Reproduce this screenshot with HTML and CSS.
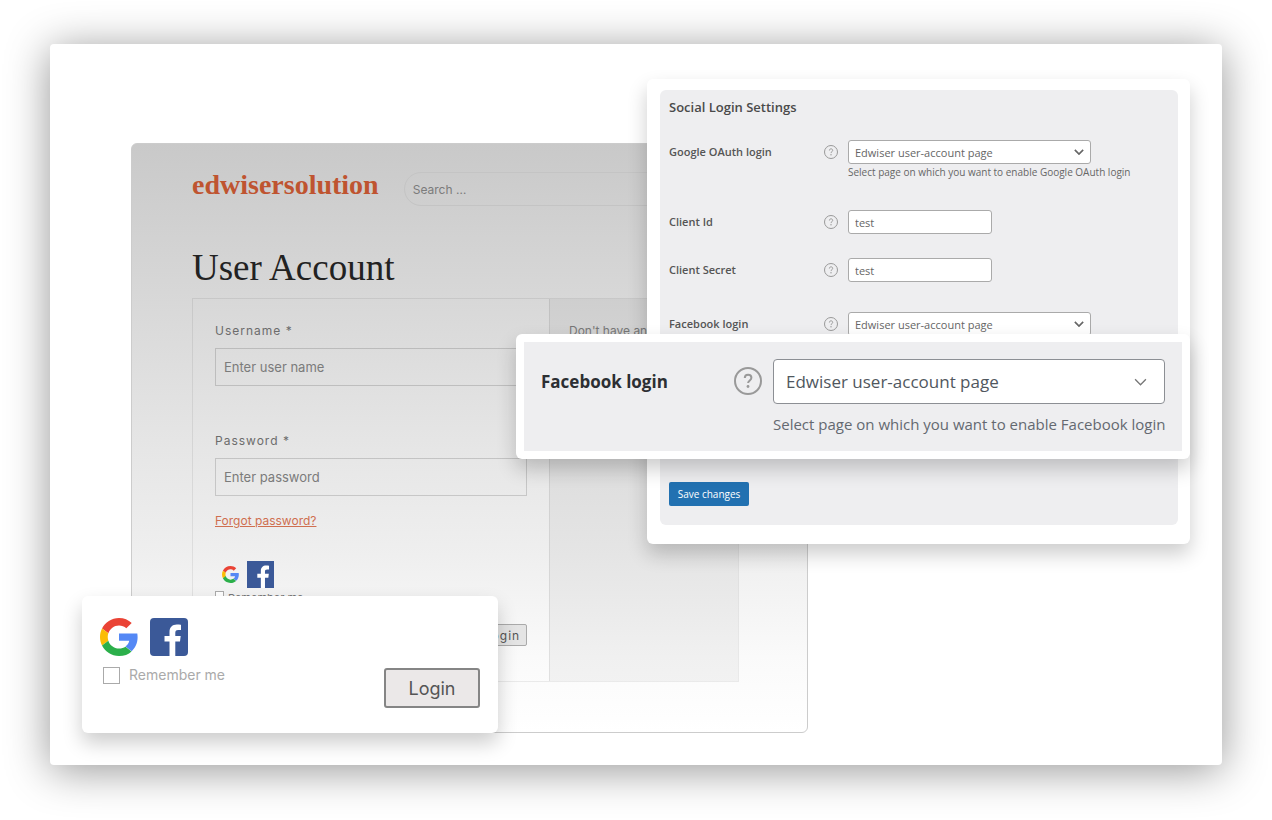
FILE: index.html
```
<!DOCTYPE html>
<html lang="en">

<head>
  <meta charset="utf-8">
  <meta name="viewport" content="width=device-width, initial-scale=1.0">
  <title>User Account</title>
  <link rel="stylesheet" href="styles.css">
</head>

<body>

<!-- shared icons -->
<svg class="icon_defs" aria-hidden="true">
  <symbol id="google" viewBox="0 0 48 48">
    <path fill="#EA4335" d="M24 9.5c3.54 0 6.71 1.22 9.21 3.6l6.85-6.85C35.9 2.38 30.47 0 24 0 14.62 0 6.51 5.38 2.56 13.22l7.98 6.19C12.43 13.72 17.74 9.5 24 9.5z"/>
    <path fill="#5488F5" d="M47.5 24.55c0-1.9-.15-3.2-.4-4.85H24v9.02h12.94c-.58 2.96-2.26 5.48-4.78 7.18l7.73 6c4.51-4.18 7.61-10.36 7.61-17.35z"/>
    <path fill="#FBBC05" d="M10.53 28.59c-.48-1.45-.76-2.99-.76-4.59s.27-3.14.76-4.59l-7.98-6.19C.92 16.46 0 20.12 0 24c0 3.88.92 7.54 2.56 10.78l7.97-6.19z"/>
    <path fill="#2BAF4A" d="M24 48c6.48 0 11.93-2.13 15.89-5.81l-7.73-6c-2.15 1.45-4.92 2.3-8.16 2.3-6.26 0-11.57-4.22-13.47-9.91l-7.98 6.19C6.51 42.62 14.62 48 24 48z"/>
  </symbol>
  <symbol id="facebook" viewBox="0 0 38 38">
    <path fill="#3b5998" d="M0 0h38v38H0z"/>
    <path fill="#fff" d="M19.500 38V23.500h-5v-5.500h5v-4c0-4.800 3-7.500 7.300-7.500 1.600 0 3.200.1 4.200.3v5.200h-2.800c-2.300 0-2.900 1.200-2.900 2.800v3.200h5.400l-.7 5.500h-4.700v14.500z"/>
  </symbol>
  <symbol id="help" viewBox="0 0 28 28">
    <circle cx="14" cy="14" r="13" fill="none" stroke="currentColor" stroke-width="2"/>
    <path d="M10.800 11c0-2.200 1.400-3.300 3.300-3.300s3.300 1.200 3.300 3c0 2.600-3.300 2.800-3.300 5.400" fill="none" stroke="currentColor" stroke-width="2"/>
    <circle cx="14" cy="19.500" r="1.400" fill="currentColor"/>
  </symbol>
  <symbol id="arrow" viewBox="0 0 12 8">
    <path d="M1 1.500l5 5 5-5" fill="none" stroke="currentColor" stroke-width="var(--w)"/>
  </symbol>
</svg>

<main class="frame">

  <section class="site">
    <header class="site_header">
      <a class="logo" href="#">edwisersolution</a>
      <input class="search" type="search" placeholder="Search …" aria-label="Search">
    </header>

    <h1>User Account</h1>

    <div class="account">
      <form class="login_form">
        <label for="username">Username *</label>
        <input class="text_box" id="username" type="text" placeholder="Enter user name">
        <label for="password">Password *</label>
        <input class="text_box" id="password" type="password" placeholder="Enter password">
        <a class="forgot" href="#">Forgot password?</a>
        <div class="social">
          <svg class="google_small"><use href="#google"/></svg>
          <svg class="facebook_small"><use href="#facebook"/></svg>
        </div>
        <div class="remember">
          <input type="checkbox" id="remember_small">
          <label for="remember_small">Remember me</label>
        </div>
        <button class="login_small" type="button">Login</button>
      </form>
      <aside class="register">Don't have an<br>account?</aside>
    </div>
  </section>

  <section class="popup settings">
    <form class="settings_panel">
      <h2>Social Login Settings</h2>
      <div class="setting">
        <label for="google_page">Google OAuth login</label>
        <svg class="help"><use href="#help"/></svg>
        <div class="field">
          <div class="select">
            <select id="google_page"><option>Edwiser user-account page</option></select>
            <svg class="arrow"><use href="#arrow"/></svg>
          </div>
          <p>Select page on which you want to enable Google OAuth login</p>
        </div>
      </div>
      <div class="setting">
        <label for="client_id">Client Id</label>
        <svg class="help"><use href="#help"/></svg>
        <input id="client_id" type="text" value="test">
      </div>
      <div class="setting">
        <label for="client_secret">Client Secret</label>
        <svg class="help"><use href="#help"/></svg>
        <input id="client_secret" type="text" value="test">
      </div>
      <div class="setting">
        <label for="facebook_page">Facebook login</label>
        <svg class="help"><use href="#help"/></svg>
        <div class="field">
          <div class="select">
            <select id="facebook_page"><option>Edwiser user-account page</option></select>
            <svg class="arrow"><use href="#arrow"/></svg>
          </div>
        </div>
      </div>
      <button class="save" type="button">Save changes</button>
    </form>
  </section>

  <section class="popup facebook">
    <div class="facebook_panel">
      <label for="facebook_large">Facebook login</label>
      <svg class="help"><use href="#help"/></svg>
      <div class="field">
        <div class="select">
          <select id="facebook_large"><option>Edwiser user-account page</option></select>
          <svg class="arrow"><use href="#arrow"/></svg>
        </div>
        <p>Select page on which you want to enable Facebook login</p>
      </div>
    </div>
  </section>

  <section class="popup login">
    <div class="social">
      <svg><use href="#google"/></svg>
      <svg class="rounded"><use href="#facebook"/></svg>
    </div>
    <div class="remember">
      <input type="checkbox" id="remember">
      <label for="remember">Remember me</label>
    </div>
    <button type="button">Login</button>
  </section>

</main>

</body>

</html>
```
FILE: styles.css
```
* {
  box-sizing: border-box;
}

body {
  margin: 0;
  background: #fff;
  font-family: "Open Sans", sans-serif;
}

h1, h2, p {
  margin: 0;
}

svg {
  display: block;
}

input, select, button {
  margin: 0;
  font-family: inherit;
}

.icon_defs {
  position: absolute;
  width: 0;
  height: 0;
}

.frame {
  position: relative;
  margin: 44px 50px 55px;
  padding: 99px 81px 32px;
  background: #fff;
  border-radius: 4px;
  box-shadow: 0 5px 44px rgba(0, 0, 0, 0.42);
}

/* site behind the popups */

.site {
  max-width: 677px;
  padding: 28px 68px 50px 60px;
  border: 1px solid #ccc;
  border-radius: 6px;
  background: linear-gradient(#c9c9c9, #d8d8d8 27%, #e6e6e6 52%, #efefef 70%, #fafafa 87%, #fff) border-box;
  font-family: Inter, sans-serif;
  color: #777;
}

.site_header {
  display: flex;
  gap: 25px;
  height: 34px;
}

.logo {
  color: #bf5430;
  font: bold 28px/25px "Liberation Serif", serif;
  text-decoration: none;
}

.search {
  flex: 1;
  min-width: 0;
  padding: 0 8px;
  border: 1px solid #c4c4c4;
  border-radius: 17px;
  background: none;
  font-size: 12px;
}

.site ::placeholder {
  color: #7b7b7b;
  opacity: 1;
}

h1 {
  margin: 40px 0 8px;
  color: #222;
  font: 37px/44px "Liberation Serif", serif;
}

.account {
  display: flex;
  border: 1px solid rgba(0, 0, 0, 0.07);
}

.login_form {
  display: flex;
  flex-direction: column;
  flex: 1;
  padding: 23px 22px 35px;
}

.login_form > label {
  margin-bottom: 8px;
  color: #6c6c6c;
  font-size: 12px;
  line-height: 18px;
  letter-spacing: 1px;
}

.text_box {
  height: 38px;
  margin-bottom: 46px;
  padding: 0 8px;
  border: 1px solid rgba(0, 0, 0, 0.15);
  background: none;
  font-size: 13px;
}

#password {
  margin-bottom: 16px;
}

.forgot {
  align-self: flex-start;
  margin-bottom: 31px;
  color: #cf6f50;
  font-size: 12px;
  line-height: 18px;
}

.social {
  display: flex;
  align-items: center;
}

.login_form .social {
  gap: 8px;
  padding-left: 7px;
}

.google_small {
  width: 17px;
  height: 17px;
}

.facebook_small {
  width: 27px;
  height: 27px;
}

.remember {
  display: flex;
  align-items: center;
}

.remember input {
  appearance: none;
  border: 1px solid #aaa;
  background: #fff;
}

.login_form .remember {
  align-items: flex-start;
  gap: 4px;
  height: 16px;
  margin: 3px 0 17px;
  font-size: 11px;
}

.login_form .remember input {
  width: 9px;
  height: 9px;
}

.login_small {
  align-self: flex-end;
  width: 50px;
  height: 22px;
  padding: 0;
  border: 1px solid #aaa;
  border-radius: 2px;
  background: #e4e4e4;
  color: #555;
  font-size: 12px;
  letter-spacing: 1px;
}

.register {
  width: 189px;
  padding: 23px 19px;
  border-left: 1px solid rgba(0, 0, 0, 0.07);
  background: rgba(0, 0, 0, 0.04);
  font-size: 12px;
  line-height: 18px;
}

/* popups */

.popup {
  position: absolute;
  border-radius: 6px;
  background: #fff;
  box-shadow: 0 10px 20px rgba(0, 0, 0, 0.2);
}

.select {
  position: relative;
}

.select select {
  display: block;
  width: 100%;
  height: 100%;
  appearance: none;
}

.arrow {
  position: absolute;
  top: 50%;
  transform: translateY(-50%);
  pointer-events: none;
}

.settings {
  top: 35px;
  right: 32px;
  width: 543px;
  padding: 11px 12px 19px 13px;
}

.settings_panel {
  padding: 7px 9px 19px;
  border-radius: 6px;
  background: #eeeef0;
  color: #666;
  font-size: 11px;
}

h2 {
  margin-bottom: 23px;
  color: #4a4a4a;
  font-size: 13px;
  font-weight: 600;
  line-height: 20px;
}

.setting {
  display: grid;
  grid-template-columns: 155px 24px 1fr;
  align-items: start;
  margin-bottom: 24px;
}

.setting:nth-child(2),
.setting:nth-child(4) {
  margin-bottom: 30px;
}

.setting:nth-child(5) {
  margin-bottom: 146px;
}

.setting label {
  color: #555;
  font-weight: 600;
  line-height: 24px;
}

.setting .help {
  width: 14px;
  height: 14px;
  margin-top: 5px;
  color: #999;
}

.setting .select {
  width: 243px;
  height: 24px;
}

.setting input,
.setting select {
  height: 24px;
  padding: 0 6px;
  border: 1px solid #aaa;
  border-radius: 3px;
  background: #fff;
  color: #666;
  font-size: 11px;
}

.setting input {
  width: 144px;
}

.setting .arrow {
  --w: 2;
  right: 7px;
  width: 10px;
  height: 7px;
}

.setting p {
  font-size: 10px;
  line-height: 16px;
}

.save {
  display: block;
  width: 80px;
  height: 24px;
  padding: 0;
  border: 0;
  border-radius: 2px;
  background: #2271b1;
  color: #fff;
  font-size: 10px;
}

.facebook {
  top: 290px;
  right: 32px;
  width: 674px;
  padding: 8px;
}

.facebook_panel {
  display: grid;
  grid-template-columns: 193px 39px 1fr;
  align-items: start;
  padding: 17px 17px 15px;
  background: #eeeef0;
}

.facebook_panel label {
  color: #2c2f33;
  font-size: 17px;
  font-weight: 700;
  line-height: 45px;
}

.facebook_panel .help {
  width: 28px;
  height: 28px;
  margin-top: 8px;
  color: #999;
}

.facebook_panel .select {
  height: 45px;
}

.facebook_panel select {
  padding: 0 12px;
  border: 1px solid #8c8f94;
  border-radius: 4px;
  background: #fff;
  color: #50575e;
  font-size: 17px;
}

.facebook_panel .arrow {
  --w: 1.2;
  right: 18px;
  width: 13px;
  height: 9px;
  color: #777;
}

.facebook_panel p {
  margin-top: 8px;
  color: #646970;
  font-size: 15px;
  line-height: 24px;
  white-space: nowrap;
}

.login {
  top: 552px;
  left: 32px;
  width: 416px;
  padding: 22px 18px 25px;
  font-family: Inter, sans-serif;
}

.login .social {
  gap: 12px;
}

.login .social svg {
  width: 38px;
  height: 38px;
}

.rounded {
  border-radius: 4px;
}

.login .remember {
  gap: 9px;
  margin: 10px 3px 0;
}

.login .remember input {
  width: 17px;
  height: 17px;
}

.login .remember label {
  color: #aaa;
  font-size: 14px;
  line-height: 18px;
}

.login button {
  display: block;
  width: 96px;
  height: 40px;
  margin: -16px 0 0 auto;
  border: 2px solid #858585;
  border-radius: 3px;
  background: #ebe8e8;
  color: #555;
  font-size: 18px;
}
```
